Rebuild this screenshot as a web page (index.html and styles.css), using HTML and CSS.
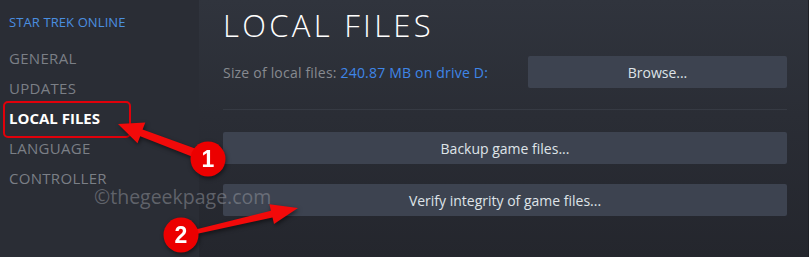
FILE: index.html
```html
<!DOCTYPE html>
<html>
<head>
<meta charset="utf-8">
<link rel="stylesheet" href="styles.css">
</head>
<body>
<div class="app">
  <nav class="sidebar">
    <div class="game">STAR TREK ONLINE</div>
    <ul class="menu">
      <li>GENERAL</li>
      <li>UPDATES</li>
      <li class="active">LOCAL FILES</li>
      <li>LANGUAGE</li>
      <li>CONTROLLER</li>
    </ul>
  </nav>
  <main class="content">
    <h1 class="title">LOCAL FILES</h1>
    <div class="size-row">
      <div class="size-text">Size of local files: <span class="size-value">240.87 MB on drive D:</span></div>
      <button class="btn btn-browse">Browse...</button>
    </div>
    <div class="divider"></div>
    <button class="btn btn-wide">Backup game files...</button>
    <button class="btn btn-wide">Verify integrity of game files...</button>
  </main>
</div>
<div class="watermark">©thegeekpage.com</div>
<svg class="annot" width="809" height="257" viewBox="0 0 809 257">
  <polygon class="arrow" points="118,124 145.3,122.6 142.6,129.6 209.6,153.8 206.4,162.2 140.2,136.2 137.5,143.2"/>
  <polygon class="arrow" points="298,208 269.4,204.3 270.9,210.7 181.5,233 182.5,237 272.5,217.5 274,223.9"/>
  <circle class="dot" cx="208" cy="159" r="17.5"/>
  <circle class="dot" cx="181" cy="235" r="17.5"/>
  <text class="num" x="208" y="167">1</text>
  <text class="num" x="181" y="243">2</text>
</svg>
</body>
</html>
```
FILE: styles.css
```css
* { box-sizing: border-box; }
html, body { margin: 0; padding: 0; }
body {
  width: 809px;
  height: 257px;
  overflow: hidden;
  background: #262930;
  font-family: "Open Sans", "Noto Sans", sans-serif;
  position: relative;
}
.app {
  display: flex;
  height: 257px;
}
.sidebar {
  width: 199px;
  flex: none;
  background: #2a2d35;
  padding: 13px 0 0 9px;
}
.game {
  color: #4a8fe0;
  font-size: 13px;
  line-height: 18px;
  margin-bottom: 12px;
  letter-spacing: 0.1px;
}
.menu {
  list-style: none;
  margin: 0;
  padding: 0;
}
.menu li {
  color: #7b7f86;
  font-size: 15px;
  line-height: 30px;
  height: 30px;
  letter-spacing: 0.3px;
}
.menu li.active {
  color: #ffffff;
  font-weight: 700;
  letter-spacing: 0;
  position: relative;
}
.menu li.active::before {
  content: "";
  position: absolute;
  left: -6px;
  top: -2px;
  width: 124px;
  height: 33px;
  border: 2px solid #e0000a;
  border-radius: 5px;
}
.content {
  flex: 1;
  background: linear-gradient(180deg, #30343d 0%, #2a2d35 45%, #24262d 100%);
  padding: 4px 21px 0 24px;
  display: flex;
  flex-direction: column;
  border-right: 1px solid #1e2026;
}
.title {
  margin: 0;
  color: #ffffff;
  font-weight: 300;
  font-size: 31px;
  line-height: 42px;
  letter-spacing: 3.3px;
}
.size-row {
  display: flex;
  align-items: center;
  justify-content: space-between;
  margin-top: 10px;
}
.size-text {
  color: #878a90;
  font-size: 14px;
  letter-spacing: 0.2px;
}
.size-value { color: #3f86e8; }
.btn {
  border: none;
  background: #3d4350;
  color: #dfe3e8;
  font-family: "Open Sans", "Noto Sans", sans-serif;
  font-size: 14px;
  height: 32px;
  border-radius: 2px;
  padding: 0;
}
.btn-browse { width: 259px; }
.divider {
  height: 1px;
  background: #363a43;
  margin: 21px 0 22px;
}
.btn-wide {
  width: 100%;
  margin-bottom: 20px;
}
.watermark {
  position: absolute;
  left: 94px;
  top: 185px;
  color: rgba(150, 153, 160, 0.5);
  font-family: "Open Sans", "Noto Sans", sans-serif;
  font-size: 19.5px;
  line-height: 24px;
}
.annot {
  position: absolute;
  left: 0;
  top: 0;
  filter: drop-shadow(1px 2px 2px rgba(0,0,0,0.5));
}
.arrow { fill: #f20a0a; }
.dot { fill: #ec0000; }
.num {
  fill: #ffffff;
  font-family: "Liberation Sans", Arial, sans-serif;
  font-weight: 700;
  font-size: 23px;
  text-anchor: middle;
}
```
